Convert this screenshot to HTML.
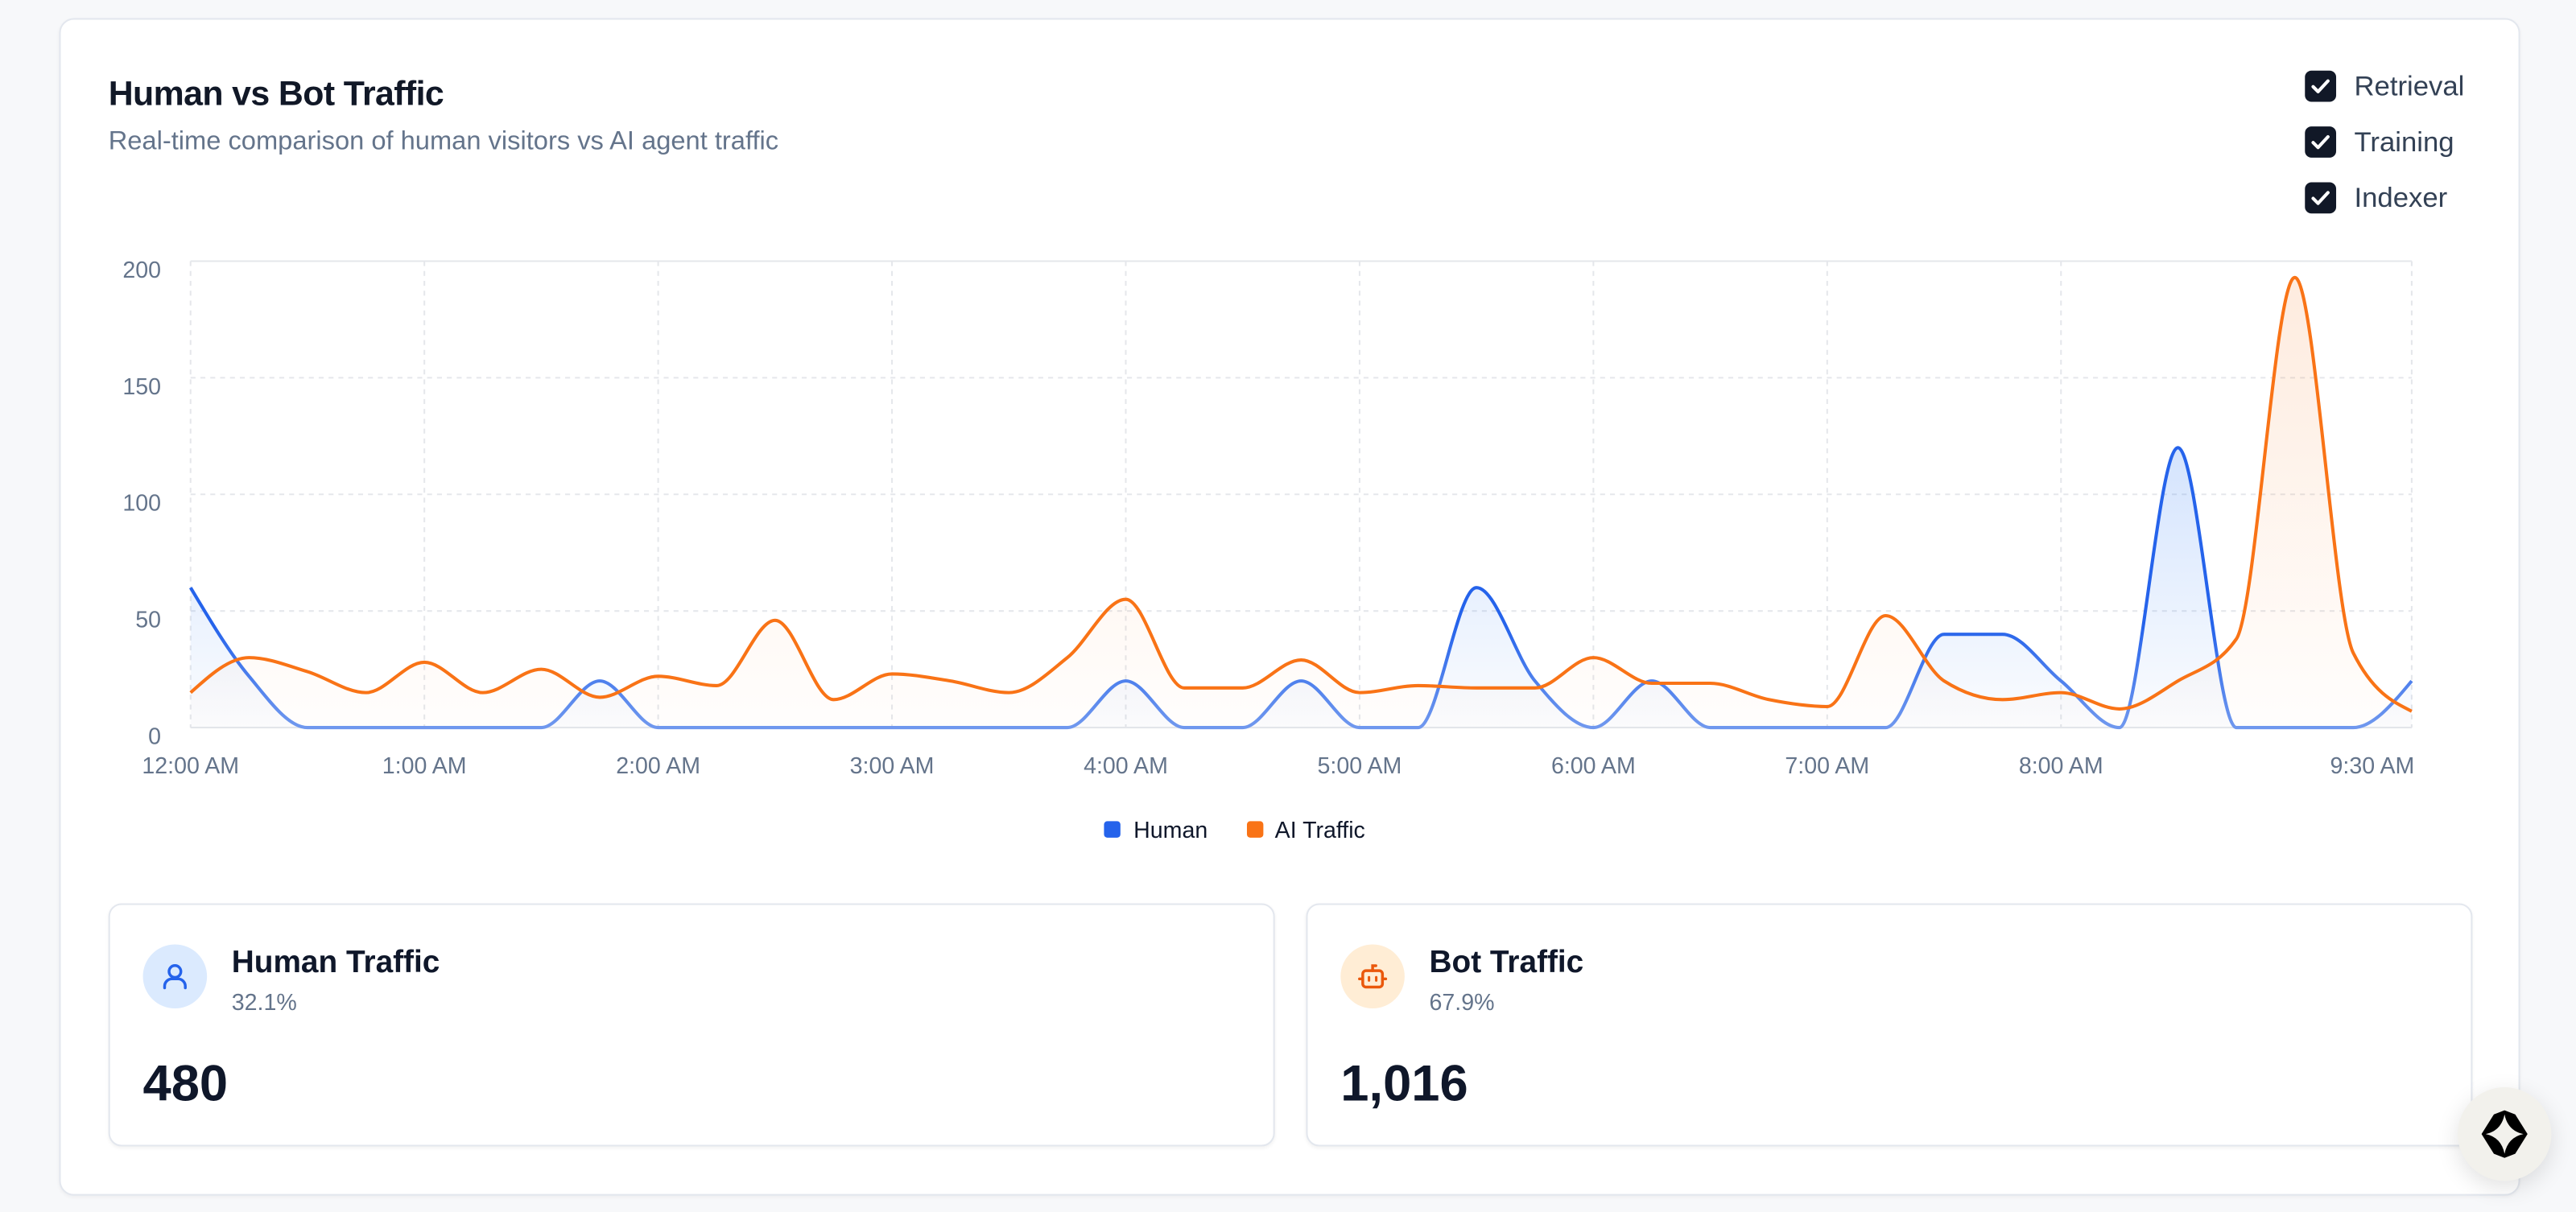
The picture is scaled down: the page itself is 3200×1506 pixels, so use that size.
<!DOCTYPE html>
<html><head><meta charset="utf-8">
<style>
html,body{margin:0;padding:0;width:3200px;height:1506px;overflow:hidden;background:#f7f8fa;}
#w{position:absolute;left:0;top:0;width:1568px;height:738px;transform:scale(2.040816);transform-origin:0 0;font-family:"Liberation Sans",sans-serif;}
.card{position:absolute;left:36px;top:11px;width:1496px;height:715px;background:#fff;border:1px solid #e3e7ee;border-radius:9px;box-shadow:0 1px 2px rgba(0,0,0,.04);}
.abs{position:absolute;white-space:nowrap;}
.cb{position:absolute;width:19px;height:19px;background:#111827;border-radius:4px;}
.lbl{position:absolute;font-size:17px;color:#334155;}
.stat{position:absolute;top:550px;width:708px;height:146px;background:#fff;border:1px solid #e3e7ee;border-radius:8px;box-shadow:0 1px 2px rgba(0,0,0,.05);}
.ic{position:absolute;left:20px;top:24px;width:39px;height:39px;border-radius:50%;}
.st{position:absolute;left:74px;top:25px;font-size:19px;font-weight:bold;color:#0f172a;}
.sp{position:absolute;left:74px;top:51px;font-size:14px;color:#64748b;}
.sn{position:absolute;left:20px;top:91px;font-size:31px;font-weight:bold;color:#0f172a;}
svg text{font-family:"Liberation Sans",sans-serif;}
</style></head><body>
<div id="w">
<div class="card"></div>
<div class="abs" style="left:66px;top:46px;font-size:21px;font-weight:bold;color:#111827;letter-spacing:-0.3px">Human vs Bot Traffic</div>
<div class="abs" style="left:66px;top:78px;font-size:16px;color:#64748b">Real-time comparison of human visitors vs AI agent traffic</div>

<div class="cb" style="left:1403px;top:43px"><svg width="19" height="19"><path d="M5 9.8l3 3 6-6.5" stroke="#fff" stroke-width="2" fill="none" stroke-linecap="round" stroke-linejoin="round"/></svg></div>
<div class="lbl" style="left:1433px;top:43px">Retrieval</div>
<div class="cb" style="left:1403px;top:77px"><svg width="19" height="19"><path d="M5 9.8l3 3 6-6.5" stroke="#fff" stroke-width="2" fill="none" stroke-linecap="round" stroke-linejoin="round"/></svg></div>
<div class="lbl" style="left:1433px;top:77px">Training</div>
<div class="cb" style="left:1403px;top:111px"><svg width="19" height="19"><path d="M5 9.8l3 3 6-6.5" stroke="#fff" stroke-width="2" fill="none" stroke-linecap="round" stroke-linejoin="round"/></svg></div>
<div class="lbl" style="left:1433px;top:111px">Indexer</div>

<svg id="ch" class="abs" style="left:0;top:0" width="1568" height="540">
<defs>
<linearGradient id="gb" x1="0" y1="0" x2="0" y2="1"><stop offset="0" stop-color="#3b82f6" stop-opacity="0.22"/><stop offset="1" stop-color="#3b82f6" stop-opacity="0.02"/></linearGradient>
<linearGradient id="go" x1="0" y1="0" x2="0" y2="1"><stop offset="0" stop-color="#f97316" stop-opacity="0.14"/><stop offset="1" stop-color="#f97316" stop-opacity="0.01"/></linearGradient>
<linearGradient id="sb" gradientUnits="userSpaceOnUse" x1="0" y1="380" x2="0" y2="443"><stop offset="0" stop-color="#2563eb"/><stop offset="1" stop-color="#7098ee"/></linearGradient>
</defs>
<g id="grid" stroke="#e5e7eb" stroke-width="1" stroke-dasharray="3 3" fill="none"></g>
<g id="areas"></g>
<g id="lines"></g>
<g id="labels" font-size="14" fill="#64748b"></g>
<rect x="672" y="500" width="10" height="10" rx="2" fill="#2563eb"/>
<text x="690" y="510" font-size="14" fill="#0f172a">Human</text>
<rect x="759" y="500" width="10" height="10" rx="2" fill="#f97316"/>
<text x="776" y="510" font-size="14" fill="#0f172a">AI Traffic</text>
</svg>

<div class="stat" style="left:66px">
 <div class="ic" style="background:#dbeafe"><svg width="39" height="39" viewBox="0 0 39 39"><circle cx="19.5" cy="16.5" r="3.6" stroke="#2563eb" stroke-width="1.7" fill="none"/><path d="M13.2 26.5v-1a4.5 4.5 0 0 1 4.5-4.5h3.6a4.5 4.5 0 0 1 4.5 4.5v1" stroke="#2563eb" stroke-width="1.7" fill="none" stroke-linecap="round"/></svg></div>
 <div class="st">Human Traffic</div><div class="sp">32.1%</div><div class="sn">480</div>
</div>
<div class="stat" style="left:795px">
 <div class="ic" style="background:#ffedd5"><svg width="39" height="39" viewBox="0 0 39 39"><rect x="13.5" y="16" width="12" height="10" rx="2" stroke="#ea580c" stroke-width="1.7" fill="none"/><path d="M19.5 16v-3h2M11.5 21h2M25.5 21h2" stroke="#ea580c" stroke-width="1.7" fill="none" stroke-linecap="round"/><path d="M17.3 20v2M21.7 20v2" stroke="#ea580c" stroke-width="1.5" stroke-linecap="round"/></svg></div>
 <div class="st">Bot Traffic</div><div class="sp">67.9%</div><div class="sn">1,016</div>
</div>

<div class="abs" style="left:1496px;top:662px;width:57px;height:57px;border-radius:50%;background:#f2f1ec;box-shadow:0 4px 14px rgba(0,0,0,.12)">
<svg width="57" height="57" viewBox="0 0 57 57"><polygon points="28.5,14 35,16.5 42.5,28.5 35,40.5 28.5,43 22,40.5 14.5,28.5 22,16.5" fill="#000"/><path d="M28.5 16.5 Q30.5 26.5 40 28.5 Q30.5 30.5 28.5 40.5 Q26.5 30.5 17 28.5 Q26.5 26.5 28.5 16.5Z" fill="#f2f1ec"/></svg>
</div>
</div>
<script>
(function(){
var NS="http://www.w3.org/2000/svg";
var X0=116,X1=1468,Y0=443,SC=1.42;
var H=[60,22,0,0,0,0,0,20,0,0,0,0,0,0,0,0,20,0,0,20,0,0,60,20,0,20,0,0,0,0,40,40,20,0,120,0,0,0,20];
var A=[15,30,24,15,28,15,25,13,22,18,46,12,23,20,15,30,55,17,17,29,15,18,17,17,30,19,19,12,9,48,20,12,15,8,20,38,193,32,7];
var step=(X1-X0)/38;
function pts(d){return d.map(function(v,i){return [X0+i*step,Y0-v*SC];});}
function sign(x){return x<0?-1:1;}
function mono(p){
 var n=p.length,t=new Array(n),s=[];
 for(var i=0;i<n-1;i++)s.push((p[i+1][1]-p[i][1])/(p[i+1][0]-p[i][0]));
 for(var i=1;i<n-1;i++){var h0=p[i][0]-p[i-1][0],h1=p[i+1][0]-p[i][0],s0=s[i-1],s1=s[i],pp=(s0*h1+s1*h0)/(h0+h1);
  t[i]=(sign(s0)+sign(s1))*Math.min(Math.abs(s0),Math.abs(s1),0.5*Math.abs(pp))||0;}
 t[0]=(3*s[0]-t[1])/2; t[n-1]=(3*s[n-2]-t[n-2])/2;
 var d="M"+p[0][0]+","+p[0][1];
 for(var i=0;i<n-1;i++){var dx=(p[i+1][0]-p[i][0])/3;
  d+="C"+(p[i][0]+dx)+","+(p[i][1]+dx*t[i])+","+(p[i+1][0]-dx)+","+(p[i+1][1]-dx*t[i+1])+","+p[i+1][0]+","+p[i+1][1];}
 return d;}
var g=document.getElementById("grid");
function ln(x1,y1,x2,y2,solid){var l=document.createElementNS(NS,"line");l.setAttribute("x1",x1);l.setAttribute("y1",y1);l.setAttribute("x2",x2);l.setAttribute("y2",y2);if(solid)l.setAttribute("stroke-dasharray","none");g.appendChild(l);}
[0,50,100,150,200].forEach(function(v){ln(X0,Y0-v*SC,X1,Y0-v*SC,v==0||v==200);});
for(var h=0;h<=8;h++){var x=X0+h*step*4;ln(x,159,x,Y0);} ln(X1,159,X1,Y0);
var lb=document.getElementById("labels");
function tx(x,y,s,a){var t=document.createElementNS(NS,"text");t.setAttribute("x",x);t.setAttribute("y",y);t.setAttribute("text-anchor",a);t.textContent=s;lb.appendChild(t);}
[0,50,100,150,200].forEach(function(v){tx(98,Y0-v*SC+10,""+v,"end");});
var xl=["12:00 AM","1:00 AM","2:00 AM","3:00 AM","4:00 AM","5:00 AM","6:00 AM","7:00 AM","8:00 AM"];
xl.forEach(function(s,i){tx(X0+i*step*4,471,s,"middle");});
tx(1444,471,"9:30 AM","middle");
var ar=document.getElementById("areas"),li=document.getElementById("lines");
function path(par,d,f,s,w){var p=document.createElementNS(NS,"path");p.setAttribute("d",d);p.setAttribute("fill",f);if(s){p.setAttribute("stroke",s);p.setAttribute("stroke-width",w);}par.appendChild(p);}
var dh=mono(pts(H)),da=mono(pts(A));
path(ar,dh+"L"+X1+","+Y0+"L"+X0+","+Y0+"Z","url(#gb)");
path(ar,da+"L"+X1+","+Y0+"L"+X0+","+Y0+"Z","url(#go)");
path(li,dh,"none","url(#sb)",2);
path(li,da,"none","#f97316",2);
})();
</script>
</body></html>
